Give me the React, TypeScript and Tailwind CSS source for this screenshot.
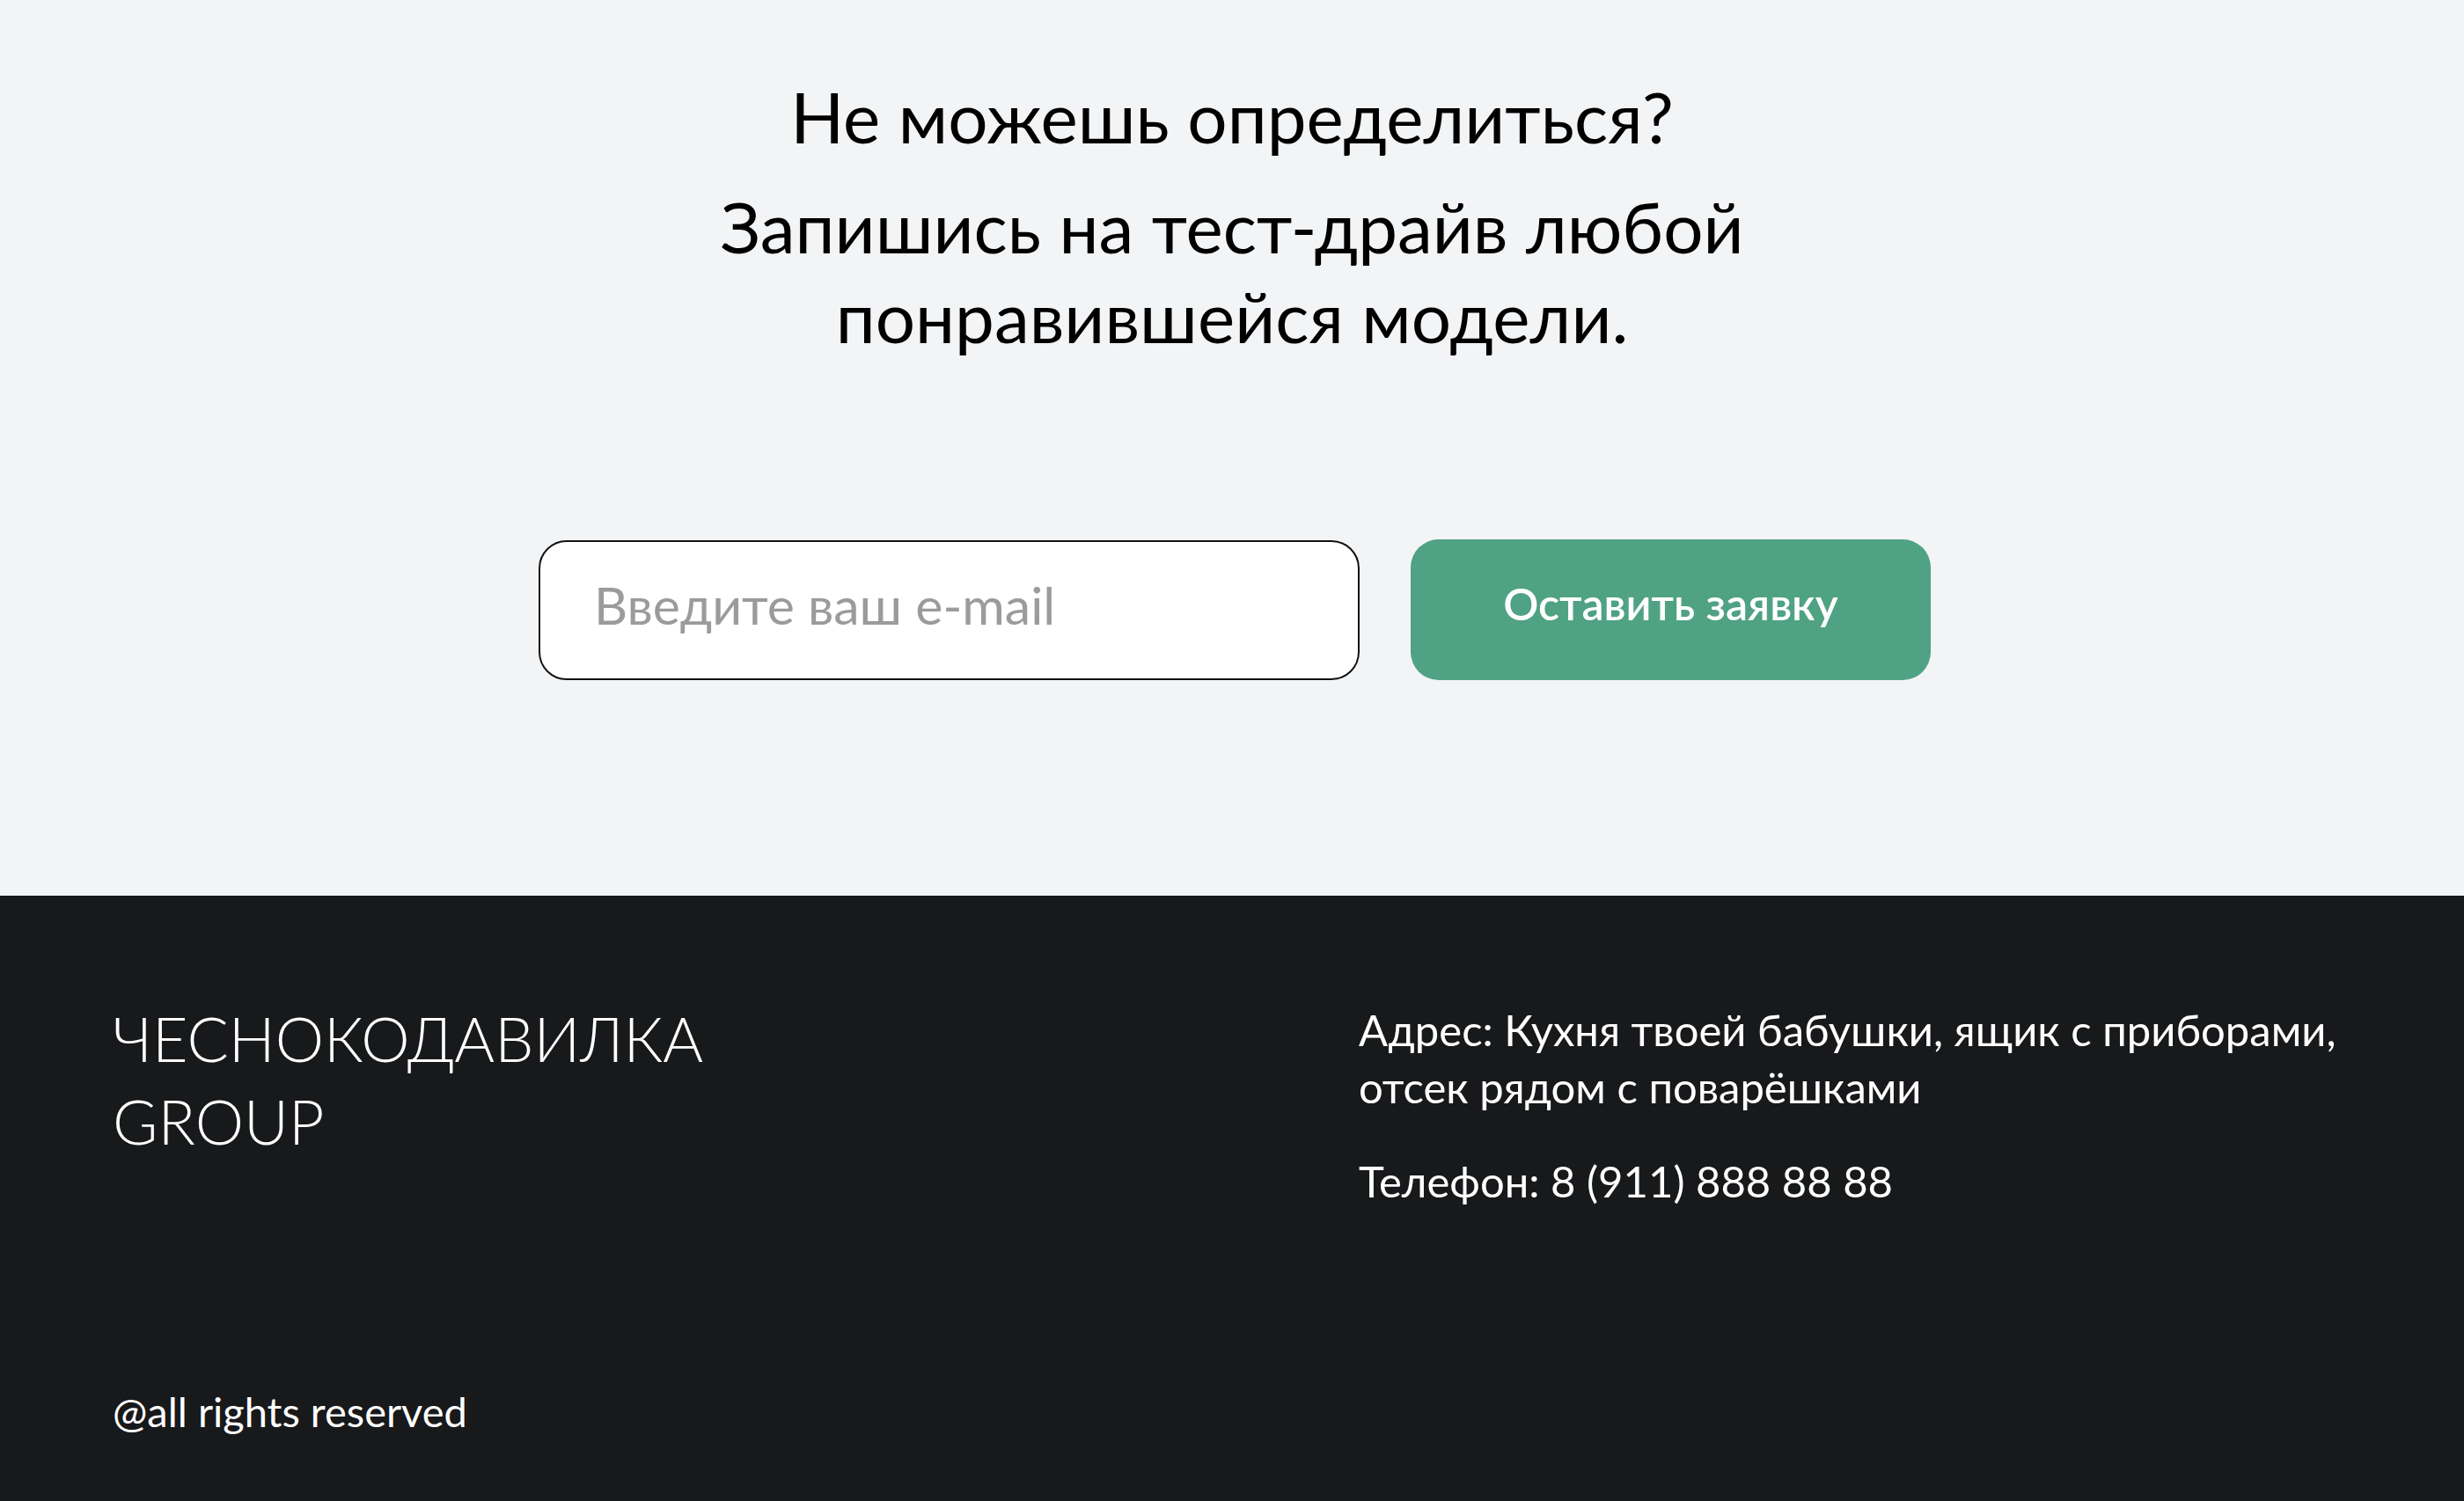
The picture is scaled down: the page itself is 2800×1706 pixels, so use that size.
import React from "react";

export default function App() {
  const font = { fontFamily: "Lato, 'Noto Sans', sans-serif" };
  return (
    <div className="w-[2800px] h-[1706px] flex flex-col" style={font}>
      <section className="h-[1018px] bg-[#f3f4f6] flex flex-col items-center pt-[82px]">
        <p className="text-[80px] leading-[100px] text-black text-center">Не можешь определиться?</p>
        <p className="mt-[24px] text-[80px] leading-[102px] text-black text-center">
          Запишись на тест-драйв любой
          <br />
          понравившейся модели.
        </p>
        <div className="mt-[203px] ml-[6px] flex items-center gap-[58px]">
          <input
            type="email"
            placeholder="Введите ваш e-mail"
            className="w-[933px] h-[159px] rounded-[32px] border-2 border-[#111] bg-white pl-[61px] pr-[40px] pb-[12px] text-[59px] text-black placeholder:text-[#9b9b9b] outline-none"
          />
          <button className="w-[591px] h-[160px] rounded-[32px] bg-[#4fa283] text-white text-[50px] font-semibold pb-[14px]">
            Оставить заявку
          </button>
        </div>
      </section>
      <footer className="flex-1 bg-[#18191b] text-white flex flex-col justify-between pl-[128px] pr-[100px] pt-[115px] pb-[74px]">
        <div className="flex">
          <div className="w-[1416px] text-[70px] leading-[94px] font-light">
            ЧЕСНОКОДАВИЛКА
            <br />
            GROUP
          </div>
          <div className="flex flex-col gap-[42px] mt-[5px] whitespace-nowrap">
            <p className="text-[49px] leading-[65px]">
              Адрес: Кухня твоей бабушки, ящик с приборами,
              <br />
              отсек рядом с поварёшками
            </p>
            <p className="text-[49px] leading-[65px]">Телефон: 8 (911) 888 88 88</p>
          </div>
        </div>
        <p className="text-[47px] leading-[56px]">@all rights reserved</p>
      </footer>
    </div>
  );
}
